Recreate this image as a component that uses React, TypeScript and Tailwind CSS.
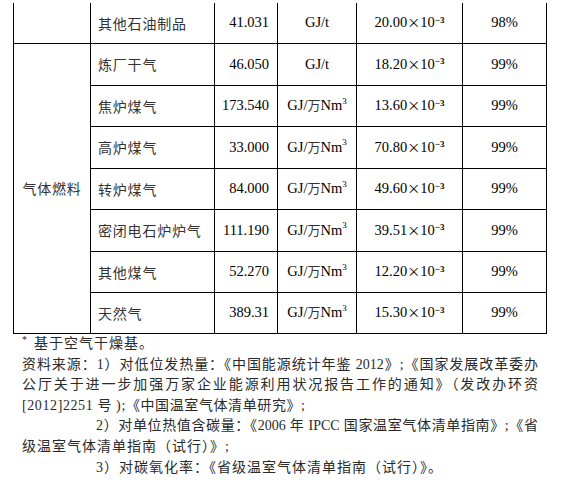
import React from 'react';

type Row = {
  name: string;
  value: string;
  unit: 't' | 'nm';
  factor: string;
  rate: string;
  h: string;
};

const gasRows: Row[] = [
  { name: '炼厂干气', value: '46.050', unit: 't', factor: '18.20', rate: '99%', h: 'h-[42px] border-b' },
  { name: '焦炉煤气', value: '173.540', unit: 'nm', factor: '13.60', rate: '99%', h: 'h-[41px] border-b' },
  { name: '高炉煤气', value: '33.000', unit: 'nm', factor: '70.80', rate: '99%', h: 'h-[42px] border-b' },
  { name: '转炉煤气', value: '84.000', unit: 'nm', factor: '49.60', rate: '99%', h: 'h-[41px] border-b' },
  { name: '密闭电石炉炉气', value: '111.190', unit: 'nm', factor: '39.51', rate: '99%', h: 'h-[42px] border-b' },
  { name: '其他煤气', value: '52.270', unit: 'nm', factor: '12.20', rate: '99%', h: 'h-[41px] border-b' },
  { name: '天然气', value: '389.31', unit: 'nm', factor: '15.30', rate: '99%', h: 'h-[40px]' },
];

const Unit = ({ unit }: { unit: 't' | 'nm' }) =>
  unit === 't' ? (
    <span>GJ/t</span>
  ) : (
    <span>
      GJ/<span className="font-['Noto_Sans_CJK_SC',sans-serif] text-[13px] text-[#333]">万</span>Nm
      <sup className="text-[9px] -top-[0.7em]">3</sup>
    </span>
  );

const Factor = ({ v }: { v: string }) => (
  <span>
    {v}
    <span className="font-['Noto_Sans_CJK_SC',sans-serif] text-[13px]">×</span>10
    <sup className="text-[9px] font-bold">−3</sup>
  </span>
);

const DataRow = ({ row }: { row: Row }) => (
  <div className={`flex border-black ${row.h}`}>
    <div className="w-[124px] border-r border-black flex items-center pl-[7px] font-['Noto_Sans_CJK_SC',sans-serif] text-[14px] tracking-[0.8px] text-[#333]">
      {row.name}
    </div>
    <div className="w-[63px] border-r border-black flex items-center justify-end pr-[8px]">{row.value}</div>
    <div className="w-[79px] border-r border-black flex items-center justify-center">
      <Unit unit={row.unit} />
    </div>
    <div className="w-[106px] border-r border-black flex items-center justify-center">
      <Factor v={row.factor} />
    </div>
    <div className="w-[83px] flex items-center justify-center">{row.rate}</div>
  </div>
);

export default function App() {
  return (
    <div className="w-[566px] h-[486px] bg-white overflow-hidden text-black font-['Liberation_Serif','Noto_Sans_CJK_SC',serif] text-[14.5px]">
      {/* table */}
      <div className="ml-[13px] mt-[3px] w-[534px] border-l border-r border-black">
        <div className="flex border-b border-black">
          <div className="w-[78px] border-r border-black" />
          <div className="flex-1">
            <DataRow
              row={{ name: '其他石油制品', value: '41.031', unit: 't', factor: '20.00', rate: '98%', h: 'h-[40px]' }}
            />
          </div>
        </div>
        <div className="flex border-b border-black">
          <div className="w-[78px] border-r border-black flex items-center justify-center font-['Noto_Sans_CJK_SC',sans-serif] text-[14px] tracking-[0.8px] text-[#333]">
            气体燃料
          </div>
          <div className="flex-1 flex flex-col">
            {gasRows.map((r) => (
              <DataRow key={r.name} row={r} />
            ))}
          </div>
        </div>
      </div>

      {/* notes */}
      <div className="ml-[22px] w-[516px] text-[14px] leading-[20.6px] text-[#2a2a2a]">
        <div className="tracking-[1px]">
          <sup className="text-[10px]">*</sup>
          <span className="ml-[6px]">基于空气干燥基。</span>
        </div>
        <div className="text-justify [text-align-last:justify]">
          资料来源：1）对低位发热量：《中国能源统计年鉴 2012》;《国家发展改革委办
        </div>
        <div className="text-justify [text-align-last:justify]">
          公厅关于进一步加强万家企业能源利用状况报告工作的通知》（发改办环资
        </div>
        <div className="tracking-[0.6px]">[2012]2251 号 );《中国温室气体清单研究》;</div>
        <div className="pl-[74px] text-justify [text-align-last:justify]">
          2）对单位热值含碳量：《2006 年 IPCC 国家温室气体清单指南》;《省
        </div>
        <div className="tracking-[1px]">级温室气体清单指南（试行）》;</div>
        <div className="pl-[74px] tracking-[1px]">3）对碳氧化率：《省级温室气体清单指南（试行）》。</div>
      </div>
    </div>
  );
}
